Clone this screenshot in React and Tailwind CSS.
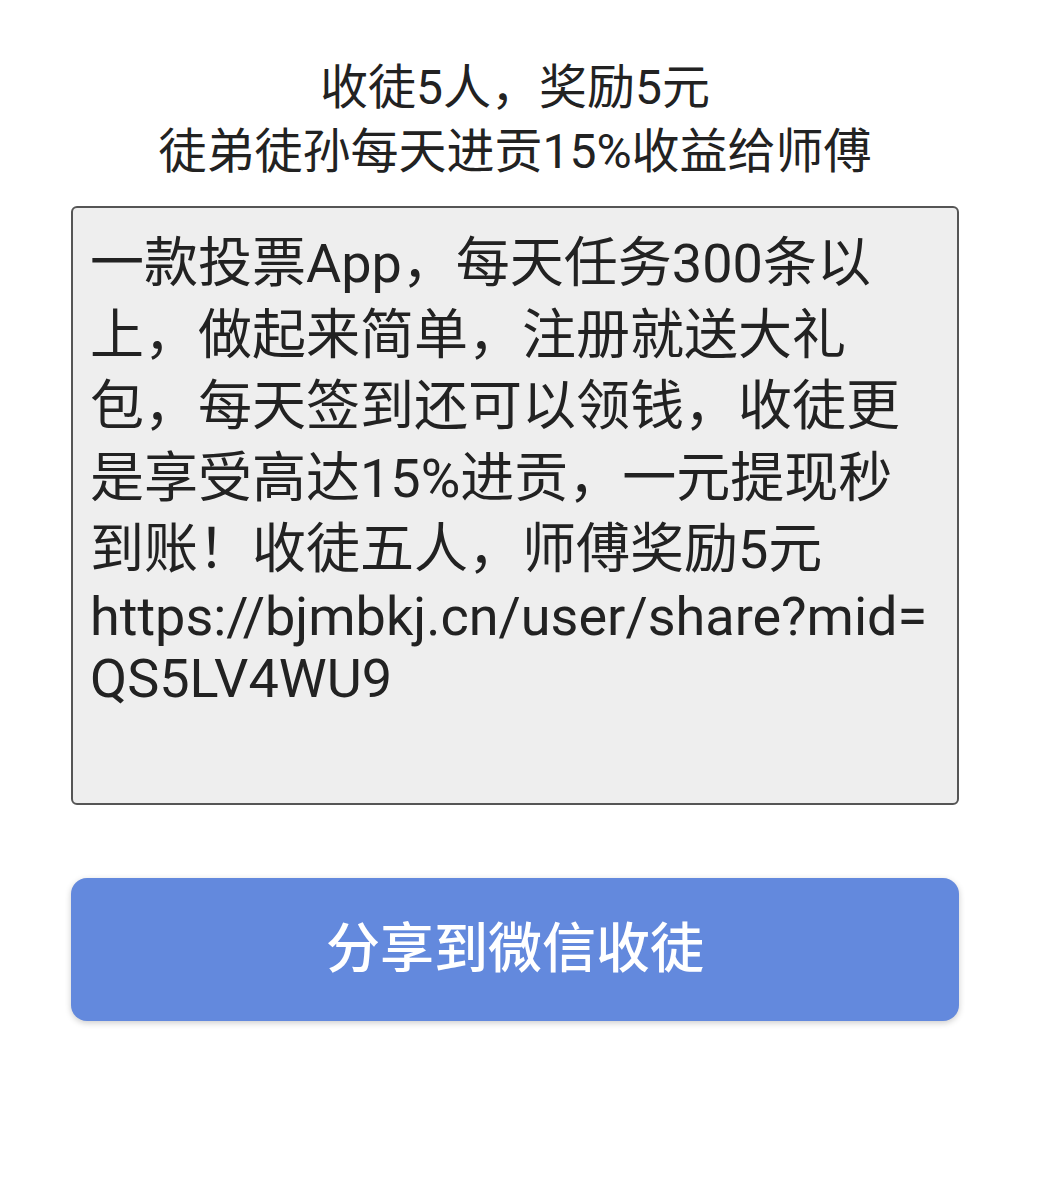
import React from 'react';

const font = { fontFamily: 'Roboto, "Noto Sans CJK SC", sans-serif' };

const App = () => {
  return (
    <div className="min-h-[1200px] bg-white text-[#222]" style={font}>
      <div className="w-[1030px]">
        <div className="pt-[56px] text-center text-[48px] leading-[64px]">
          <p>收徒5人，奖励5元</p>
          <p>徒弟徒孙每天进贡15%收益给师傅</p>
        </div>

        <div className="mx-[71px] mt-[22px] h-[599px] rounded-[6px] border-2 border-[#555] bg-[#eeeeee] px-[17px] pt-[20px] text-[54px] leading-[62px] break-all">
          <span className="leading-[71.5px]">
            一款投票App，每天任务300条以上，做起来简单，注册就送大礼包，每天签到还可以领钱，收徒更是享受高达15%进贡，一元提现秒到账！收徒五人，师傅奖励5元
          </span>
          <br />
          https://bjmbkj.cn/user/share?mid=QS5LV4WU9
        </div>

        <div className="mx-[71px] mt-[73px]">
          <button className="flex h-[143px] w-full items-center justify-center rounded-[16px] bg-[#6389dd] text-[54px] font-medium text-white shadow-[0_2px_6px_rgba(0,0,0,0.2)]">
            分享到微信收徒
          </button>
        </div>
      </div>
    </div>
  );
};

export default App;
